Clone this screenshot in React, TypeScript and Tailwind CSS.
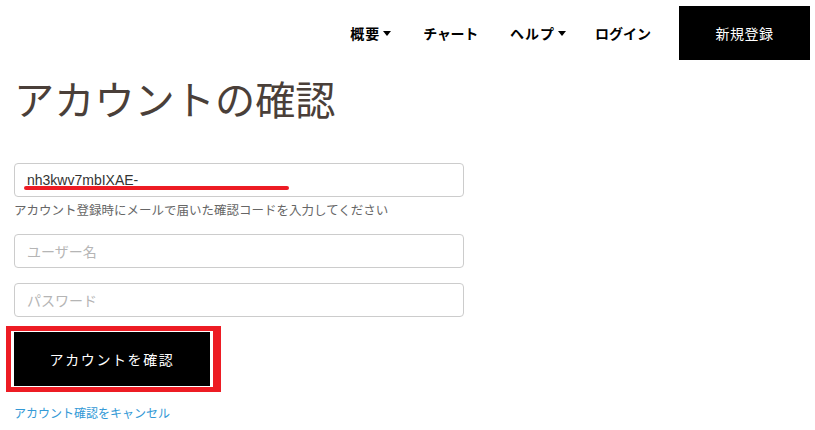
import { useState } from 'react'

const jp = '[font-family:"Noto_Sans_CJK_JP","Liberation_Sans",sans-serif]'

function Caret() {
  return (
    <svg width="8" height="5" viewBox="0 0 8 5" className="ml-[3px] mt-[1px]">
      <path d="M0 0h8L4 5z" fill="#000" />
    </svg>
  )
}

function NavBar() {
  return (
    <nav className={`flex items-start justify-end pr-[5px] pt-[6px] text-[14px] text-black ${jp}`}>
      <div className="flex h-[54px] items-center">
        <a className="flex items-center font-bold tracking-[1px]">
          概要
          <Caret />
        </a>
        <a className="ml-[32px] font-bold tracking-[-0.3px]">チャート</a>
        <a className="ml-[32px] flex items-center font-bold tracking-[1px]">
          ヘルプ
          <Caret />
        </a>
        <a className="ml-[29px] font-bold">ログイン</a>
      </div>
      <a className="ml-[28px] flex h-[54px] w-[131px] items-center justify-center bg-black text-[14px] tracking-[0.5px] text-white">
        新規登録
      </a>
    </nav>
  )
}

export default function App() {
  const [code, setCode] = useState('nh3kwv7mbIXAE-')

  return (
    <div className="h-[430px] w-[815px] overflow-hidden bg-white">
      <NavBar />
      <main className="pl-[14px]">
        <h1 className={`mt-[13px] h-[50px] text-[40.2px] leading-[50px] text-[#4a3f39] ${jp}`}>
          アカウントの確認
        </h1>

        <div className="relative mt-[40px] w-[450px]">
          <input
            value={code}
            onChange={(e) => setCode(e.target.value)}
            className="h-[34px] w-full rounded-[4px] border border-[#cccccc] px-[12px] text-[14px] text-[#333] outline-none [font-family:'Liberation_Sans',sans-serif]"
          />
          <span className="absolute left-[10px] top-[23px] h-[4px] w-[265px] rounded-full bg-[#ed1c24]" />
        </div>
        <p className={`mt-[4px] text-[12.5px] leading-[18px] text-[#666] ${jp}`}>
          アカウント登録時にメールで届いた確認コードを入力してください
        </p>

        <input
          placeholder="ユーザー名"
          className={`mt-[15px] block h-[34px] w-[450px] rounded-[4px] border border-[#cccccc] px-[12px] text-[14px] outline-none placeholder:text-[#b5b5b5] ${jp}`}
        />
        <input
          type="password"
          placeholder="パスワード"
          className={`mt-[15px] block h-[34px] w-[450px] rounded-[4px] border border-[#cccccc] px-[12px] text-[14px] outline-none placeholder:text-[#b5b5b5] ${jp}`}
        />

        <div className="-ml-[8px] mt-[9px] inline-block border-[5px] border-r-[8px] border-[#ed1c24] px-[3px] py-px">
          <button
            className={`block h-[54px] w-[196px] bg-black text-[14px] tracking-[1.6px] text-white ${jp}`}
          >
            アカウントを確認
          </button>
        </div>

        <a className={`mt-[12px] block text-[12px] text-[#3399d6] ${jp}`}>
          アカウント確認をキャンセル
        </a>
      </main>
    </div>
  )
}
